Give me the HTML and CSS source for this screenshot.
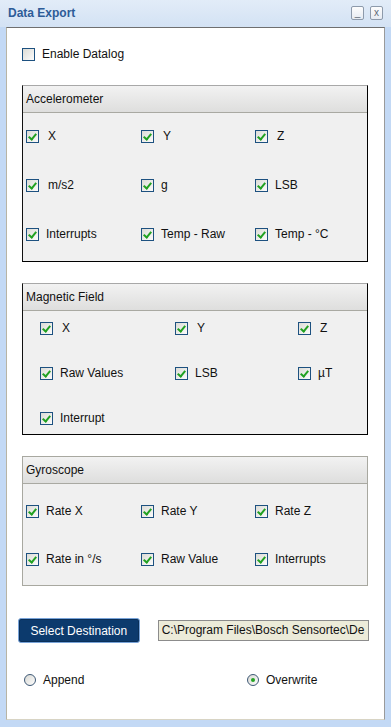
FILE: index.html
```html
<!DOCTYPE html>
<html lang="en">
<head>
    <meta charset="UTF-8">
    <meta name="viewport" content="width=device-width, initial-scale=1.0">
    <title>Data Export</title>
    <link rel="stylesheet" href="styles.css">
</head>
<body>
    <div class="window">
        <div class="titlebar">
            <span class="title">Data Export</span>
            <div class="win-buttons">
                <span class="win-btn">_</span>
                <span class="win-btn">x</span>
            </div>
        </div>

        <div class="panel">
            <label class="check enable"><span class="cb"></span>Enable Datalog</label>

            <div class="group acc">
                <div class="group-head">Accelerometer</div>
                <div class="group-body">
                    <label class="check"><span class="cb on"></span><span class="pad">X</span></label>
                    <label class="check"><span class="cb on"></span><span class="pad">Y</span></label>
                    <label class="check"><span class="cb on"></span><span class="pad">Z</span></label>
                    <label class="check"><span class="cb on"></span><span class="pad">m/s2</span></label>
                    <label class="check"><span class="cb on"></span>g</label>
                    <label class="check"><span class="cb on"></span>LSB</label>
                    <label class="check"><span class="cb on"></span>Interrupts</label>
                    <label class="check"><span class="cb on"></span>Temp - Raw</label>
                    <label class="check"><span class="cb on"></span>Temp - °C</label>
                </div>
            </div>

            <div class="group mag">
                <div class="group-head">Magnetic Field</div>
                <div class="group-body">
                    <label class="check"><span class="cb on"></span><span class="pad">X</span></label>
                    <label class="check"><span class="cb on"></span><span class="pad">Y</span></label>
                    <label class="check"><span class="cb on"></span><span class="pad">Z</span></label>
                    <label class="check"><span class="cb on"></span>Raw Values</label>
                    <label class="check"><span class="cb on"></span>LSB</label>
                    <label class="check"><span class="cb on"></span>µT</label>
                    <label class="check"><span class="cb on"></span>Interrupt</label>
                </div>
            </div>

            <div class="group gyro">
                <div class="group-head">Gyroscope</div>
                <div class="group-body">
                    <label class="check"><span class="cb on"></span>Rate X</label>
                    <label class="check"><span class="cb on"></span>Rate Y</label>
                    <label class="check"><span class="cb on"></span>Rate Z</label>
                    <label class="check"><span class="cb on"></span>Rate in °/s</label>
                    <label class="check"><span class="cb on"></span>Raw Value</label>
                    <label class="check"><span class="cb on"></span>Interrupts</label>
                </div>
            </div>

            <div class="dest-row">
                <button class="dest-btn">Select Destination</button>
                <div class="path-field">C:\Program Files\Bosch Sensortec\De</div>
            </div>

            <div class="radio-row">
                <label class="radio append"><span class="rb"></span>Append</label>
                <label class="radio"><span class="rb on"></span>Overwrite</label>
            </div>
        </div>
    </div>
</body>
</html>
```

FILE: styles.css
```css
body { margin: 0; background: #c3d9f5; font-family: "Liberation Sans", Arial, sans-serif; font-size: 12px; color: #111; }
.window { width: 391px; height: 727px; background: #c3d9f5; display: flex; flex-direction: column; }

.titlebar { height: 27px; flex: none; display: flex; align-items: center; justify-content: space-between; padding: 0 8px 0 8px; box-sizing: border-box; background: linear-gradient(#e2ecf8, #d3e2f4); }
.title { font-weight: bold; color: #2d5c98; font-size: 12px; margin-top: -2px; }
.win-buttons { display: flex; gap: 6px; margin-top: -1px; }
.win-btn { width: 13px; height: 14px; box-sizing: border-box; border: 1px solid #8d9aab; border-radius: 2px; background: linear-gradient(#fdfdfd, #e6ebf2); color: #5f6a78; font-size: 10px; line-height: 11px; text-align: center; }

.panel { margin: 0 6px 0 6px; height: 693px; background: #fff; border: 1px solid; border-color: #6f6f6f #9a9a9a #d8d4c4 #b8b4a4; box-sizing: border-box; padding: 0 15px 0 11px; display: flex; flex-direction: column; }

.check { display: flex; align-items: center; height: 16px; white-space: nowrap; }
.cb { position: relative; width: 13px; height: 13px; box-sizing: border-box; border: 1px solid #1d5180; background: linear-gradient(135deg, #dcdcd6, #fbfbfb); margin-right: 7px; flex: none; }
.cb.on::after { content: ""; position: absolute; left: 3px; top: 1px; width: 3px; height: 6px; border: solid #21a121; border-width: 0 2px 2px 0; transform: rotate(40deg); }
.pad { padding-left: 2px; }

.enable { margin: 18px 0 0 4px; }

.group { margin-left: 4px; width: 346px; box-sizing: border-box; border: 1px solid; background: #f0f0f0; }
.acc, .mag { border-color: #a8a8a8 #000 #000 #111; }
.gyro { border-color: #a8a8a0; }
.group-head { height: 26px; border-bottom: 1px solid #a9a9a2; background: linear-gradient(#f2f2f2, #dededd); display: flex; align-items: center; padding-left: 3px; }
.group-body { display: grid; grid-template-columns: 115px 114px 1fr; grid-auto-rows: 16px; padding-left: 3px; }

.acc { margin-top: 23px; }
.acc .group-body { padding-top: 15px; padding-bottom: 19px; row-gap: 33px; }

.mag { margin-top: 21px; }
.mag .group-body { grid-template-columns: 135px 123px 1fr; padding: 9px 0 8px 17px; row-gap: 29px; }

.gyro { margin-top: 21px; }
.gyro .group-body { padding-top: 19px; padding-bottom: 18px; row-gap: 32px; }

.dest-row { display: flex; align-items: center; margin-top: 32px; height: 25px; }
.dest-btn { width: 122px; height: 25px; background: #0c3a6d; color: #fff; border: 1px solid #78a3d8; border-radius: 3px; box-shadow: inset 0 0 0 1px #0a2f58; font-family: "Liberation Sans", Arial, sans-serif; font-size: 12px; padding: 0; }
.path-field { margin-left: 18px; width: 212px; height: 21px; box-sizing: border-box; background: #ecebd9; border: 1px solid #8c8c8c; padding: 0 3px; line-height: 19px; white-space: nowrap; overflow: hidden; color: #111; }

.radio-row { display: flex; margin: 29px 0 0 6px; }
.radio { display: flex; align-items: center; height: 16px; }
.radio.append { width: 223px; }
.rb { position: relative; width: 12px; height: 12px; box-sizing: border-box; border: 1px solid #3e5976; border-radius: 50%; background: linear-gradient(135deg, #d9d9d4, #fdfdfd); margin-right: 7px; }
.rb.on::after { content: ""; position: absolute; left: 3px; top: 3px; width: 4px; height: 4px; border-radius: 50%; background: #24a324; }
```
